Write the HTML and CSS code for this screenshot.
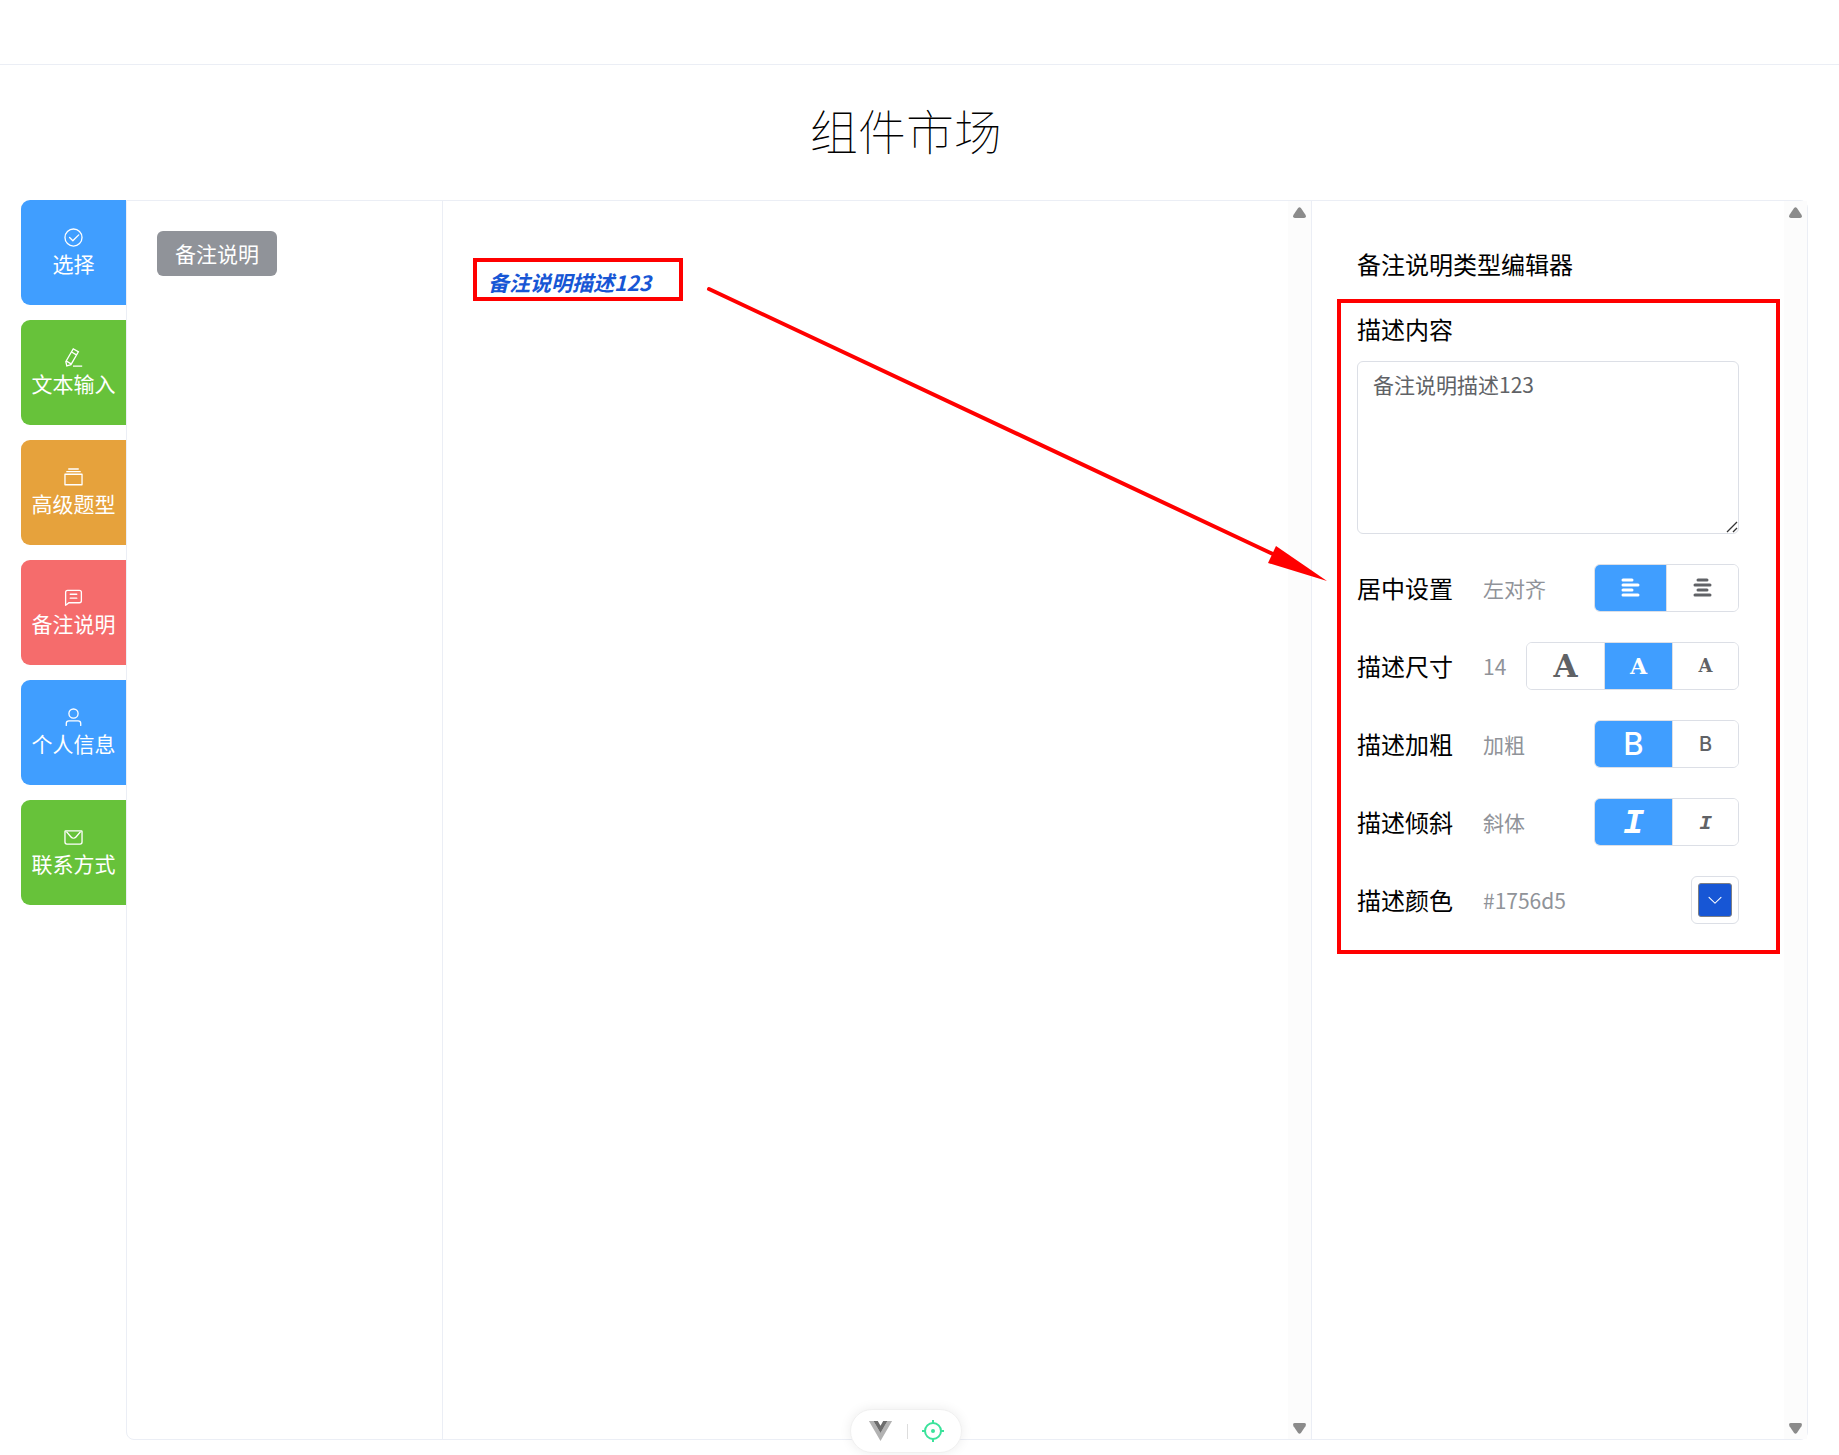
FILE: index.html
```html
<!DOCTYPE html>
<html lang="zh-CN">
<head>
  <meta charset="UTF-8">
  <meta name="viewport" content="width=device-width, initial-scale=1.0">
  <title>组件市场</title>
  <link rel="stylesheet" href="styles.css">
</head>
<body>
  <header class="header"></header>
  <h1 class="title">组件市场</h1>

  <main class="market">
    <!-- Component groups -->
    <nav class="groups">
      <a class="group-item blue" href="#select">
        <svg class="icon" viewBox="0 0 1024 1024"><path d="M512 896a384 384 0 1 0 0-768 384 384 0 0 0 0 768m0 64a448 448 0 1 1 0-896 448 448 0 0 1 0 896"/><path d="M745.344 361.344a32 32 0 0 1 45.312 45.312l-288 288a32 32 0 0 1-45.312 0l-160-160a32 32 0 1 1 45.312-45.312L480 626.752z"/></svg>
        <span>选择</span>
      </a>
      <a class="group-item green" href="#input">
        <svg class="icon" viewBox="0 0 1024 1024"><path d="m199.04 672.64 193.984 112 224-387.968-193.92-112-224 388.032zm-23.872 60.16 32.896 148.288 144.896-45.696zM455.04 229.248l193.92 112 56.704-98.112-193.984-112zM104.32 708.8l384-665.024 304.768 175.936L409.152 884.8h.064l-248.448 78.336zm384 254.272v-64h448v64z"/></svg>
        <span>文本输入</span>
      </a>
      <a class="group-item orange" href="#advanced">
        <svg class="icon" viewBox="0 0 1024 1024"><path d="M128 384v448h768V384zm-32-64h832a32 32 0 0 1 32 32v512a32 32 0 0 1-32 32H96a32 32 0 0 1-32-32V352a32 32 0 0 1 32-32m64-128h704v64H160zm96-128h512v64H256z"/></svg>
        <span>高级题型</span>
      </a>
      <a class="group-item red" href="#note">
        <svg class="icon" viewBox="0 0 1024 1024"><path d="M160 826.88 273.536 736H800a64 64 0 0 0 64-64V256a64 64 0 0 0-64-64H224a64 64 0 0 0-64 64zM296 800 147.968 918.4A32 32 0 0 1 96 893.44V256a128 128 0 0 1 128-128h576a128 128 0 0 1 128 128v416a128 128 0 0 1-128 128z"/><path d="M352 512h320q32 0 32 32t-32 32H352q-32 0-32-32t32-32m0-192h320q32 0 32 32t-32 32H352q-32 0-32-32t32-32"/></svg>
        <span>备注说明</span>
      </a>
      <a class="group-item blue" href="#personal">
        <svg class="icon" viewBox="0 0 1024 1024"><path d="M512 512a192 192 0 1 0 0-384 192 192 0 0 0 0 384m0 64a256 256 0 1 1 0-512 256 256 0 0 1 0 512m320 320v-96a96 96 0 0 0-96-96H288a96 96 0 0 0-96 96v96a32 32 0 1 1-64 0v-96a160 160 0 0 1 160-160h448a160 160 0 0 1 160 160v96a32 32 0 1 1-64 0"/></svg>
        <span>个人信息</span>
      </a>
      <a class="group-item green" href="#contact">
        <svg class="icon" viewBox="0 0 1024 1024"><path d="M128 224v512a64 64 0 0 0 64 64h640a64 64 0 0 0 64-64V224zm0-64h768a64 64 0 0 1 64 64v512a128 128 0 0 1-128 128H192A128 128 0 0 1 64 736V224a64 64 0 0 1 64-64"/><path d="M904 224 656.512 506.88a192 192 0 0 1-289.024 0L120 224zm-698.944 0 210.56 240.704a128 128 0 0 0 192.704 0L818.944 224z"/></svg>
        <span>联系方式</span>
      </a>
    </nav>

    <div class="panels">
      <!-- Component list -->
      <section class="catalog">
        <button class="component-btn" type="button">备注说明</button>
      </section>

      <!-- Preview -->
      <section class="preview">
        <div class="preview-body">
          <p class="note">备注说明描述123</p>
        </div>
        <div class="scrollbar">
          <svg class="scroll-arrow" viewBox="0 0 15 12"><path d="M6 1.2Q7.5-.6 9 1.2L14 8.5Q15.5 12 12.5 12H2.5Q-.5 12 1 8.5z"/></svg>
          <svg class="scroll-arrow" viewBox="0 0 15 12"><path d="M6 10.8Q7.5 12.6 9 10.8L14 3.5Q15.5 0 12.5 0H2.5Q-.5 0 1 3.5z"/></svg>
        </div>
        <div class="mark mark-note"></div>
        <svg class="mark-arrow" viewBox="0 0 620 300"><path class="mark-line" d="M4 4 570 270"/><path class="mark-head" d="M571 261 622 296 563 278z"/></svg>
      </section>

      <!-- Editor -->
      <section class="editor">
        <div class="editor-body">
          <h2 class="editor-title">备注说明类型编辑器</h2>
          <label class="field-label" for="desc">描述内容</label>
          <div class="textarea-wrap">
            <textarea id="desc" class="textarea">备注说明描述123</textarea>
            <svg class="resizer" viewBox="0 0 12 12"><path d="M1 11 11 1M7 11 11 7"/></svg>
          </div>

          <div class="row">
            <span class="field-label">居中设置</span>
            <span class="value">左对齐</span>
            <div class="btn-group">
              <button class="btn btn-align active" type="button" aria-label="左对齐">
                <svg class="align-icon" viewBox="0 0 21 21"><path d="M3 2H12M3 7H18M3 12H12M3 17H18"/></svg>
              </button>
              <button class="btn btn-align" type="button" aria-label="居中对齐">
                <svg class="align-icon" viewBox="0 0 21 21"><path d="M6 2H15M3 7H18M6 12H15M3 17H18"/></svg>
              </button>
            </div>
          </div>

          <div class="row">
            <span class="field-label">描述尺寸</span>
            <span class="value">14</span>
            <div class="btn-group">
              <button class="btn btn-large slab size-l" type="button">A</button>
              <button class="btn btn-medium slab size-m active" type="button">A</button>
              <button class="btn btn-small slab size-s" type="button">A</button>
            </div>
          </div>

          <div class="row">
            <span class="field-label">描述加粗</span>
            <span class="value">加粗</span>
            <div class="btn-group">
              <button class="btn btn-large bold-l active" type="button">B</button>
              <button class="btn btn-small bold-s" type="button">B</button>
            </div>
          </div>

          <div class="row">
            <span class="field-label">描述倾斜</span>
            <span class="value">斜体</span>
            <div class="btn-group">
              <button class="btn btn-large italic italic-l active" type="button">I</button>
              <button class="btn btn-small italic italic-s" type="button">I</button>
            </div>
          </div>

          <div class="row">
            <span class="field-label">描述颜色</span>
            <span class="value">#1756d5</span>
            <button class="color-picker" type="button" aria-label="描述颜色">
              <span class="color-block">
                <svg class="color-arrow" viewBox="0 0 1024 1024"><path d="M831.872 340.864 512 652.672 192.128 340.864a30.592 30.592 0 0 0-42.752 0 29.12 29.12 0 0 0 0 41.6L489.664 714.24a32 32 0 0 0 44.672 0l340.288-331.712a29.12 29.12 0 0 0 0-41.728 30.592 30.592 0 0 0-42.752 0z"/></svg>
              </span>
            </button>
          </div>
        </div>
        <div class="scrollbar">
          <svg class="scroll-arrow" viewBox="0 0 15 12"><path d="M6 1.2Q7.5-.6 9 1.2L14 8.5Q15.5 12 12.5 12H2.5Q-.5 12 1 8.5z"/></svg>
          <svg class="scroll-arrow" viewBox="0 0 15 12"><path d="M6 10.8Q7.5 12.6 9 10.8L14 3.5Q15.5 0 12.5 0H2.5Q-.5 0 1 3.5z"/></svg>
        </div>
        <div class="mark mark-editor"></div>
      </section>
    </div>
  </main>

  <!-- Devtools -->
  <div class="devtools">
    <button class="devtools-btn" type="button" aria-label="Devtools">
      <svg class="vue-icon" viewBox="0 0 256 221"><path fill="#b2b2b2" d="m0 0 128 220.8L256 0h-51.2L128 132.48 50.56 0z"/><path fill="#6c6c6c" d="M50.56 0 128 133.12 204.8 0h-47.36L128 51.2 97.92 0z"/></svg>
    </button>
    <span class="devtools-line"></span>
    <button class="devtools-btn" type="button" aria-label="Inspector">
      <svg class="target-icon" viewBox="0 0 24 24"><circle cx="12" cy="12" r="8"/><path d="M12 1v4M12 19v4M1 12h4M19 12h4"/><circle class="target-dot" cx="12" cy="12" r="2"/></svg>
    </button>
  </div>
</body>
</html>
```
FILE: styles.css
```css
* {
  box-sizing: border-box;
  margin: 0;
  padding: 0;
}
body {
  display: flex;
  flex-direction: column;
  min-height: 100vh;
  background: #fff;
  color: #000;
  font-family: "Noto Sans CJK SC", "Noto Sans", sans-serif;
  font-size: 21px;
  line-height: 32px;
}
button,
textarea {
  font: inherit;
}
button {
  border: none;
  cursor: pointer;
}

/* Header and title */
.header {
  height: 65px;
  border-bottom: 1px solid #ebeef5;
}
.title {
  margin: 28px 27px 35px 0;
  font-size: 48px;
  font-weight: 100;
  line-height: 72px;
  text-align: center;
}

/* Market layout */
.market {
  flex: 1;
  display: flex;
  margin: 0 31px 15px 21px;
}
.groups {
  display: flex;
  flex-direction: column;
  gap: 15px;
  width: 105px;
}
.group-item {
  display: flex;
  flex-direction: column;
  align-items: center;
  justify-content: center;
  height: 105px;
  border-radius: 9px 0 0 9px;
  color: #fff;
  line-height: 30px;
  text-decoration: none;
}
.blue {
  background: #409eff;
}
.green {
  background: #67c23a;
}
.orange {
  background: #e6a23c;
}
.red {
  background: #f56c6c;
}
.icon {
  width: 21px;
  height: 21px;
  fill: currentColor;
}
.panels {
  flex: 1;
  display: grid;
  grid-template-columns: 316px 1fr 496px;
  border: 1px solid #ebeef5;
  border-radius: 0 8px 8px 8px;
}
.catalog {
  padding: 30px;
}
.component-btn {
  width: 120px;
  height: 45px;
  padding-bottom: 2px;
  border-radius: 6px;
  background: #909399;
  color: #fff;
}

/* Preview */
.preview,
.editor {
  position: relative;
  display: flex;
  border-left: 1px solid #ebeef5;
}
.preview {
  margin-left: -1px;
}
.preview-body {
  flex: 1;
  padding: 65px 45px;
}
.note {
  color: #1756d5;
  font-weight: bold;
  font-style: italic;
}
.scrollbar {
  display: flex;
  flex-direction: column;
  justify-content: space-between;
  align-items: center;
  width: 23px;
  padding: 6px 0 5px;
  background: #fcfcfc;
}
.scroll-arrow {
  width: 15px;
  height: 11px;
  fill: #8b8b8b;
}

/* Editor */
.editor-body {
  flex: 1;
  padding: 45px;
}
.editor-title {
  margin-bottom: 29px;
  font-size: 24px;
  font-weight: normal;
  line-height: 36px;
}
.field-label {
  font-size: 24px;
  line-height: 36px;
}
.textarea-wrap {
  position: relative;
  margin: 14px 0 30px;
}
.textarea {
  display: block;
  width: 100%;
  height: 173px;
  padding: 6px 15px;
  border: 1px solid #dcdfe6;
  border-radius: 6px;
  outline: none;
  color: #606266;
  resize: none;
}
.resizer {
  position: absolute;
  right: 1px;
  bottom: 1px;
  width: 12px;
  height: 12px;
  fill: none;
  stroke: #333;
  stroke-width: 1.3;
}
.row {
  display: flex;
  align-items: center;
  height: 48px;
  margin-bottom: 30px;
}
.value {
  margin-left: 30px;
  color: #909399;
}
.btn-group {
  display: flex;
  height: 48px;
  margin-left: auto;
  border: 1px solid #dcdfe6;
  border-radius: 6px;
  overflow: hidden;
}
.btn {
  box-sizing: content-box;
  display: flex;
  align-items: center;
  justify-content: center;
  background: #fff;
  color: #606266;
}
.btn + .btn {
  border-left: 1px solid #dcdfe6;
}
.btn.active {
  background: #409eff;
  color: #fff;
}
.btn-align {
  width: 71px;
}
.btn-large {
  width: 77px;
}
.btn-medium {
  width: 67px;
}
.btn-small {
  width: 65px;
}
.align-icon {
  width: 21px;
  height: 21px;
  fill: none;
  stroke: currentColor;
  stroke-width: 3;
  stroke-linecap: round;
}
.slab {
  font-family: "DejaVu Serif", serif;
  font-weight: bold;
}
.size-l {
  font-size: 31px;
}
.size-m {
  font-size: 22px;
}
.size-s {
  font-size: 18px;
}
.bold-l,
.bold-s {
  font-family: Inter, sans-serif;
  font-weight: 500;
}
.bold-l {
  font-size: 31px;
}
.bold-s {
  font-size: 20px;
}
.italic {
  padding-top: 4px;
  font-family: "Liberation Mono", monospace;
  font-style: italic;
  font-weight: bold;
}
.italic-l {
  font-size: 35px;
}
.italic-s {
  font-size: 21px;
}
.color-picker {
  width: 48px;
  height: 48px;
  margin-left: auto;
  padding: 6px;
  border: 1px solid #dcdfe6;
  border-radius: 6px;
  background: #fff;
}
.color-block {
  display: flex;
  align-items: center;
  justify-content: center;
  height: 34px;
  border: 1px solid #7d7f85;
  border-radius: 3px;
  background: #1756d5;
}
.color-arrow {
  width: 18px;
  height: 18px;
  fill: #fff;
}

/* Red callouts */
.mark {
  position: absolute;
  border: 4px solid #f00;
  pointer-events: none;
}
.mark-note {
  top: 57px;
  left: 30px;
  width: 210px;
  height: 43px;
}
.mark-editor {
  top: 98px;
  left: 25px;
  width: 443px;
  height: 655px;
}
.mark-arrow {
  position: absolute;
  z-index: 1;
  top: 84px;
  left: 262px;
  width: 620px;
  height: 300px;
  overflow: visible;
  pointer-events: none;
}
.mark-line {
  fill: none;
  stroke: #f00;
  stroke-width: 4;
  stroke-linecap: round;
}
.mark-head {
  fill: #f00;
}

/* Devtools bar */
.devtools {
  position: fixed;
  bottom: 2px;
  left: calc(50% - 70px);
  display: flex;
  align-items: center;
  justify-content: space-between;
  width: 112px;
  height: 44px;
  padding: 0 16px;
  border: 1px solid #f0f0f0;
  border-radius: 22px;
  background: #fff;
  box-shadow: 0 0 12px rgba(0, 0, 0, 0.08);
}
.devtools-btn {
  display: flex;
  background: none;
}
.devtools-line {
  width: 1px;
  height: 15px;
  background: #ddd;
}
.vue-icon {
  width: 27px;
  height: 20px;
}
.target-icon {
  width: 24px;
  height: 24px;
  fill: none;
  stroke: #3be29b;
  stroke-width: 2;
}
.target-dot {
  fill: #3be29b;
  stroke: none;
}
```
